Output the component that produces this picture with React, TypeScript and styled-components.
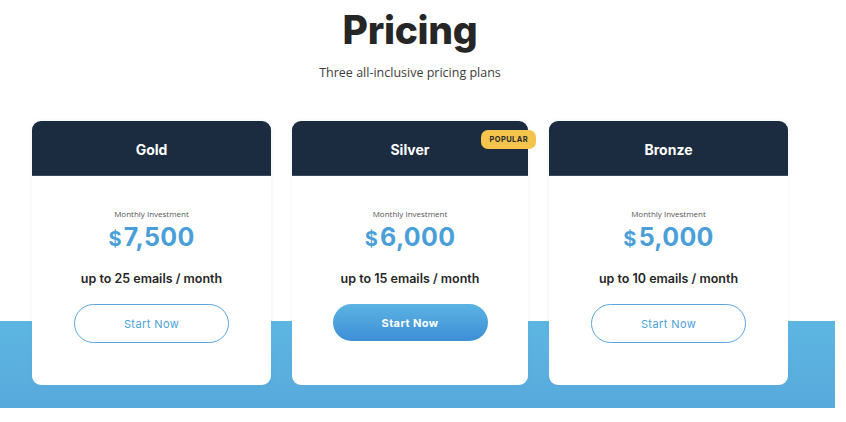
import React from 'react';
import styled, { createGlobalStyle, css } from 'styled-components';

const GlobalStyle = createGlobalStyle`
  html, body {
    margin: 0;
    padding: 0;
    background: #ffffff;
  }
  body {
    font-family: 'Montserrat', 'Inter', 'Noto Sans', sans-serif;
    color: #2a2a2a;
  }
`;

interface Plan {
  name: string;
  price: string;
  emails: number;
  popular?: boolean;
}

const plans: Plan[] = [
  { name: 'Gold', price: '7,500', emails: 25 },
  { name: 'Silver', price: '6,000', emails: 15, popular: true },
  { name: 'Bronze', price: '5,000', emails: 10 },
];

// blue strip runs behind the lower half of the cards
const Section = styled.section`
  width: 835px;
  height: 422px;
  box-sizing: border-box;
  padding-top: 5px;
  background: linear-gradient(
    to bottom,
    #ffffff 0,
    #ffffff 321px,
    #5db6e2 321px,
    #57aadc 408px,
    #ffffff 408px
  );
`;

const Heading = styled.h1`
  margin: 0;
  width: 820px;
  text-align: center;
  font-family: 'Inter', 'Open Sans', sans-serif;
  font-weight: 800;
  font-size: 39px;
  line-height: 49px;
  letter-spacing: -0.3px;
  color: #262626;
`;

const Subtitle = styled.p`
  margin: 10px 0 0;
  width: 820px;
  text-align: center;
  font-family: 'Open Sans', sans-serif;
  font-size: 12.5px;
  line-height: 18px;
  color: #3d3d3d;
`;

const CardRow = styled.div`
  display: flex;
  gap: 21px;
  padding-left: 32px;
  margin-top: 39px;
`;

const Card = styled.div<{ $narrow?: boolean }>`
  position: relative;
  width: ${(p) => (p.$narrow ? 236 : 239)}px;
  height: 264px;
  display: flex;
  flex-direction: column;
  align-items: center;
  background: #ffffff;
  border-radius: 9px;
  box-shadow: 0 0 4px rgba(120, 150, 200, 0.14);
`;

const CardHead = styled.div`
  width: 100%;
  height: 55px;
  padding-top: 3px;
  display: flex;
  align-items: center;
  justify-content: center;
  background: #1b2b40;
  border-radius: 9px 9px 0 0;
  border-bottom: 1px solid #3b4a5e;
  box-sizing: border-box;
  color: #ffffff;
  font-family: 'Inter', 'Open Sans', sans-serif;
  font-weight: 700;
  font-size: 14px;
`;

const Badge = styled.span`
  position: absolute;
  top: 9px;
  right: -8px;
  padding: 0 8px;
  height: 19px;
  line-height: 19px;
  border-radius: 7px;
  background: #f5c44c;
  color: #2b2b2b;
  font-family: 'Inter', sans-serif;
  font-size: 7.5px;
  font-weight: 700;
  letter-spacing: 0.4px;
`;

const Label = styled.div`
  margin-top: 32px;
  font-family: 'Open Sans', sans-serif;
  font-size: 8px;
  color: #555555;
`;

const Price = styled.div`
  margin-top: 3px;
  display: flex;
  align-items: baseline;
  font-family: 'Inter', 'Open Sans', sans-serif;
  font-weight: 700;
  font-size: 25px;
  line-height: 30px;
  color: #4b9fd8;
  letter-spacing: 0.3px;
`;

const Currency = styled.span`
  font-size: 20px;
  margin-right: 2px;
`;

const Quota = styled.div`
  margin-top: 17px;
  font-family: 'Inter', 'Open Sans', sans-serif;
  font-weight: 600;
  font-size: 12.5px;
  color: #262626;
`;

const StartButton = styled.button<{ $filled?: boolean }>`
  margin-top: 18px;
  width: 155px;
  height: 39px;
  border-radius: 20px;
  border: 1px solid #5aa6e0;
  background: #ffffff;
  color: #4b9fd8;
  font-family: 'Inter', 'Open Sans', sans-serif;
  font-size: 11px;
  font-weight: 400;
  letter-spacing: 0.4px;
  cursor: pointer;

  ${(p) =>
    p.$filled &&
    css`
      border: none;
      height: 37px;
      background: linear-gradient(to bottom, #5bb3e3, #3e8fd6);
      color: #ffffff;
      font-weight: 700;
    `}
`;

const App: React.FC = () => {
  return (
    <>
      <GlobalStyle />
      <Section>
        <Heading>Pricing</Heading>
        <Subtitle>Three all-inclusive pricing plans</Subtitle>
        <CardRow>
          {plans.map((plan) => (
            <Card key={plan.name} $narrow={plan.popular}>
              <CardHead>{plan.name}</CardHead>
              {plan.popular && <Badge>POPULAR</Badge>}
              <Label>Monthly Investment</Label>
              <Price>
                <Currency>$</Currency>
                {plan.price}
              </Price>
              <Quota>up to {plan.emails} emails / month</Quota>
              <StartButton $filled={plan.popular}>Start Now</StartButton>
            </Card>
          ))}
        </CardRow>
      </Section>
    </>
  );
};

export default App;
